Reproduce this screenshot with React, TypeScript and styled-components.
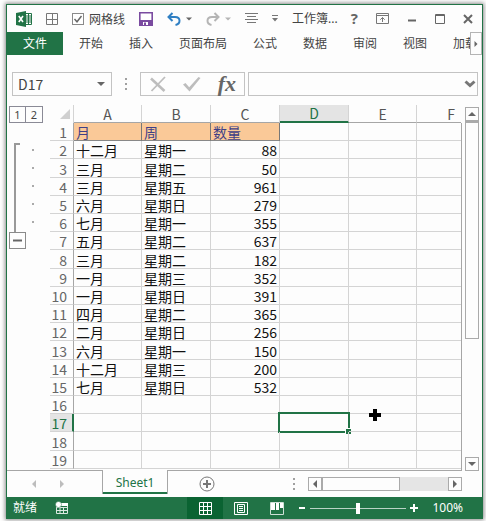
import React from "react";
import styled, { createGlobalStyle, css } from "styled-components";

const green = "#217346";
const line = "#d4d4d4";
const rule = "#a6a6a6";
const uiFont = `"Noto Sans", "Noto Sans CJK SC", sans-serif`;
const cellFont = `"Noto Sans CJK SC", sans-serif`;

const GlobalStyle = createGlobalStyle`
  *, *::before, *::after { box-sizing: border-box; }
  body { margin: 0; background: #fdfdfd; font-family: ${uiFont}; font-size: 12px; color: #444; }
  button, input { font: inherit; color: inherit; }
  svg { display: block; }
`;

const Page = styled.div`
  display: flex;
  min-height: 100vh;
  padding: 4px 3px 2px 6px;
`;

const Window = styled.main`
  flex: 1;
  min-width: 0;
  display: flex;
  flex-direction: column;
  border: 1px solid ${green};
  border-bottom: 0;
  background: #fdfdfd;
  box-shadow: 0 0 4px 1px #8c8c8c;
`;

const PlainButton = styled.button`
  display: flex;
  align-items: center;
  justify-content: center;
  flex: none;
  padding: 0;
  border: 0;
  background: none;
`;

/* Title bar */
const TitleBar = styled.header`
  display: flex;
  align-items: center;
  gap: 14px;
  height: 27px;
  padding: 0 9px;
`;

const Split = styled.div`
  display: flex;
  align-items: center;
  gap: 5px;
`;

const CheckLabel = styled.label`
  display: flex;
  align-items: center;
  gap: 5px;
  white-space: nowrap;
`;

const CheckBox = styled.span`
  display: grid;
  width: 12px;
  height: 12px;
  > * { grid-area: 1 / 1; }
  svg { pointer-events: none; }
`;

const CheckInput = styled.input`
  appearance: none;
  margin: 0;
  width: 12px;
  height: 12px;
  border: 1px solid #8a8a8a;
  background: #fff;
`;

const Title = styled.h1`
  flex: 1;
  margin: 0;
  min-width: 0;
  white-space: nowrap;
  font-size: 12px;
  line-height: 18px;
  font-weight: 400;
`;

const Controls = styled.div`
  display: flex;
  align-items: center;
  gap: 18px;
`;

const HelpMark = styled.span`
  padding-bottom: 2px;
  font: bold 15px/18px "Open Sans", sans-serif;
  color: #666;
`;

/* Ribbon tabs */
const Ribbon = styled.nav`
  display: flex;
  height: 23px;
`;

const FileTab = styled(PlainButton)`
  width: 56px;
  padding-bottom: 2px;
  background: ${green};
  color: #fff;
`;

const TabStrip = styled.div`
  flex: 1;
  min-width: 0;
  display: flex;
  overflow: hidden;
  padding-left: 3px;
`;

const RibbonTab = styled(PlainButton)`
  padding: 0 13px 2px;
  white-space: nowrap;
`;

const ScrollTabs = styled(PlainButton)`
  width: 12px;
  border: 1px solid #b4b4b4;
`;

/* Formula bar */
const FormulaBar = styled.section`
  display: flex;
  align-items: center;
  padding: 17px 4px 9px 5px;
`;

const Box = styled.div`
  display: flex;
  align-items: center;
  height: 24px;
  border: 1px solid #c3c3c3;
`;

const NameBox = styled(Box)`
  width: 100px;
  padding: 0 6px 0 5px;
`;

const FxBox = styled(Box)`
  width: 105px;
  padding: 0 8px;
  justify-content: space-between;
`;

const FormulaBox = styled(Box)`
  flex: 1;
  min-width: 0;
  margin-left: 3px;
  padding-right: 1px;
`;

const TextInput = styled.input`
  flex: 1;
  min-width: 0;
  width: 0;
  padding: 0;
  border: 0;
  outline: 0;
  background: none;
  font-family: ${cellFont};
  font-size: 14px;
  line-height: 20px;
`;

const Fx = styled.span`
  font: italic bold 22px/22px "Liberation Serif", serif;
  color: #666;
`;

const Grip = styled.span`
  flex: none;
  width: 2px;
  height: 12px;
  margin: 0 13px;
  background: repeating-linear-gradient(#a0a0a0 0 2px, transparent 2px 5px);
`;

/* Sheet */
const Workspace = styled.section`
  flex: 1;
  display: flex;
  min-height: 0;
`;

const Pane = styled.div`
  flex: 1;
  min-width: 0;
  display: flex;
  border-bottom: 1px solid ${rule};
`;

const Outline = styled.aside`
  flex: none;
  width: 43px;
  padding: 1px 7px 0 2px;
`;

const Levels = styled.div`
  display: flex;
  width: 34px;
`;

const LevelButton = styled(PlainButton)`
  width: 17px;
  height: 17px;
  border: 1px solid #8a8a96;
  font-size: 11px;
  & + & { border-left: 0; }
`;

const Group = styled.div`
  display: flex;
  padding-top: 20px;
`;

const Bracket = styled.div`
  width: 17px;
`;

const BracketLine = styled.div`
  width: 6px;
  height: 89px;
  margin-left: 5px;
  border-top: 2px solid #999;
  border-left: 2px solid #999;
`;

const Collapse = styled(PlainButton)`
  width: 17px;
  height: 17px;
  border: 1px solid #8a8a8a;
`;

const Dots = styled.div`
  display: flex;
  flex-direction: column;
  gap: 16px;
  padding: 6px 0 0 6px;
`;

const Dot = styled.i`
  width: 2px;
  height: 2px;
  background: #aaa;
`;

const SheetFrame = styled.div`
  flex: 1;
  min-width: 0;
  display: flex;
  padding-right: 1px;
  background: linear-gradient(transparent 18px, ${rule} 18px);
`;

const SheetView = styled.div`
  flex: 1;
  min-width: 0;
  display: flex;
  overflow: hidden;
  padding-bottom: 1px;
  background: #fdfdfd;
`;

const Sheet = styled.table`
  flex: none;
  width: 436px;
  table-layout: fixed;
  border-spacing: 0;
  font-family: ${cellFont};
  font-size: 14px;
  line-height: 16px;
`;

const Col = styled.col<{ $w: number }>`
  width: ${(p) => p.$w}px;
`;

const ColHead = styled.th<{ $active?: boolean }>`
  height: 18px;
  padding: 0;
  font-weight: 400;
  color: #555;
  border-right: 1px solid ${line};
  border-bottom: 1px solid ${rule};
  ${(p) => p.$active && css`
    background: #e4e4e4;
    color: ${green};
    border-bottom: 2px solid ${green};
  `}
`;

const Corner = styled.th`
  height: 18px;
  padding: 0 3px 0 10px;
  border-right: 1px solid ${line};
`;

const RowHead = styled.th<{ $active?: boolean }>`
  padding: 1px 6px 0 0;
  text-align: right;
  font-weight: 400;
  color: #666;
  border-right: 1px solid ${rule};
  border-bottom: 1px solid ${line};
  ${(p) => p.$active && css`
    padding-right: 5px;
    background: #e4e4e4;
    color: ${green};
    border-right: 2px solid ${green};
  `}
`;

const Cell = styled.td<{ $head?: boolean; $num?: boolean }>`
  position: relative;
  padding: 1px 2px 0;
  white-space: nowrap;
  color: #111;
  text-align: ${(p) => (p.$num ? "right" : "left")};
  border-right: 1px solid ${line};
  border-bottom: 1px solid ${line};
  ${(p) => p.$head && css`
    background: #fac998;
    color: #3f3f86;
    border-right-color: #777;
    border-bottom-color: #888;
  `}
`;

const Selection = styled.div`
  position: absolute;
  inset: -2px;
  border: 2px solid ${green};
  &::after {
    content: "";
    position: absolute;
    right: -3px;
    bottom: -3px;
    width: 6px;
    height: 6px;
    border: solid #fdfdfd;
    border-width: 1px 0 0 1px;
    background: ${green};
  }
`;

const Pointer = styled.svg`
  position: absolute;
  left: 20px;
  top: -5px;
`;

const VScroll = styled.div`
  flex: none;
  width: 20px;
  display: flex;
  flex-direction: column;
  padding: 2px 3px 0 3px;
`;

const ScrollButton = styled(PlainButton)`
  width: 14px;
  height: 14px;
  border: 1px solid #aaa;
`;

const VTrack = styled.div`
  flex: 1;
`;

const VThumb = styled.div`
  height: 65%;
  border: 1px solid #aaa;
  border-top-width: 2px;
`;

/* Sheet tabs */
const SheetBar = styled.section`
  display: flex;
  align-items: center;
  height: 26px;
  padding-right: 20px;
`;

const SheetNav = styled.div`
  display: flex;
  gap: 20px;
  width: 95px;
  padding-left: 23px;
`;

const SheetTab = styled(PlainButton)`
  align-self: flex-start;
  width: 66px;
  height: 24px;
  margin-top: -1px;
  border: solid ${rule};
  border-width: 0 1px;
  box-shadow: inset 0 -2px ${green};
  background: #fdfdfd;
  color: ${green};
`;

const AddSheet = styled(PlainButton)`
  margin-left: 31px;
`;

const Spacer = styled.div`
  flex: 1;
`;

const HScroll = styled.div`
  display: flex;
  width: 154px;
  background: #e5e5e5;
`;

const HTrack = styled.div`
  flex: 1;
`;

const HThumb = styled.div`
  width: 62%;
  height: 14px;
  border: 1px solid #aaa;
  background: #fdfdfd;
`;

const HButton = styled(ScrollButton)`
  background: #fdfdfd;
`;

/* Status bar */
const StatusBar = styled.footer`
  display: flex;
  align-items: stretch;
  height: 22px;
  padding: 0 19px 0 6px;
  background: ${green};
  color: #fff;
`;

const StatusText = styled.span`
  align-self: center;
  padding-bottom: 2px;
  white-space: nowrap;
`;

const MacroButton = styled(PlainButton)`
  margin-left: 18px;
`;

const ViewButton = styled(PlainButton)<{ $active?: boolean }>`
  width: 36px;
  background: ${(p) => (p.$active ? "#0a6332" : "none")};
`;

const Zoom = styled.div`
  display: flex;
  align-items: center;
  gap: 4px;
  margin: 0 14px 0 3px;
`;

const ZoomSlider = styled.input`
  appearance: none;
  width: 96px;
  height: 12px;
  margin: 0;
  background: linear-gradient(#b9d3c5, #b9d3c5) center / 100% 1px no-repeat;
  &::-webkit-slider-thumb {
    appearance: none;
    width: 4px;
    height: 11px;
    background: #fff;
  }
`;

type Dir = "up" | "down" | "left" | "right";
const arrows: Record<Dir, string> = {
  up: "M0 6 4 2l4 4z",
  down: "M0 2h8L4 6z",
  left: "M6 0v8L2 4z",
  right: "M2 0v8l4-4z",
};
const Arrow = ({ dir, size = 8, color = "#666" }: { dir: Dir; size?: number; color?: string }) => (
  <svg width={size} height={size} viewBox="0 0 8 8" fill={color}><path d={arrows[dir]} /></svg>
);

const ExcelLogo = () => (
  <svg width="16" height="16" viewBox="0 0 16 16">
    <path d="M9 2.5h6.5v11H9z" fill="#fff" stroke={green} />
    <path d="M10 5h5M10 7h5M10 9h5M10 11h5M12.5 3v10" stroke={green} />
    <path d="M0 2 10 0v16L0 14z" fill={green} />
    <path d="m2.8 5 4.2 6M7 5l-4.2 6" stroke="#fff" strokeWidth="1.6" />
  </svg>
);

const UndoIcon = ({ color, flip }: { color: string; flip?: boolean }) => (
  <svg width="14" height="14" viewBox="0 0 14 14" fill="none" stroke={color} strokeWidth="2">
    <g transform={flip ? "matrix(-1 0 0 1 14 0)" : undefined}>
      <path d="M5.5 1 1.5 5l4 4M2 5h6c3 0 4.5 1.6 4.5 3.8S11 12.5 8.5 13" />
    </g>
  </svg>
);

const columns = [
  { name: "A", width: 68 },
  { name: "B", width: 69 },
  { name: "C", width: 69 },
  { name: "D", width: 69 },
  { name: "E", width: 68 },
  { name: "F", width: 69 },
];

const data: string[][] = [
  ["月", "周", "数量"],
  ["十二月", "星期一", "88"],
  ["三月", "星期二", "50"],
  ["三月", "星期五", "961"],
  ["六月", "星期日", "279"],
  ["七月", "星期一", "355"],
  ["五月", "星期二", "637"],
  ["三月", "星期二", "182"],
  ["一月", "星期三", "352"],
  ["一月", "星期日", "391"],
  ["四月", "星期二", "365"],
  ["二月", "星期日", "256"],
  ["六月", "星期一", "150"],
  ["十二月", "星期三", "200"],
  ["七月", "星期日", "532"],
  [], [], [], [],
];

const ribbonTabs = ["开始", "插入", "页面布局", "公式", "数据", "审阅", "视图", "加载项"];

export default function App() {
  return (
    <Page>
      <GlobalStyle />
      <Window>
        <TitleBar>
          <ExcelLogo />
          <PlainButton aria-label="边框">
            <svg width="12" height="12" viewBox="0 0 12 12" fill="none" stroke="#777"><path d="M.5.5h11v11H.5zM6.5 0v12M0 6.5h12" /></svg>
          </PlainButton>
          <CheckLabel>
            <CheckBox>
              <CheckInput type="checkbox" defaultChecked />
              <svg width="12" height="12" viewBox="0 0 12 12" fill="none" stroke="#666" strokeWidth="1.4"><path d="m2.5 6 2.5 2.8L9.5 3" /></svg>
            </CheckBox>
            网格线
          </CheckLabel>
          <PlainButton aria-label="保存">
            <svg width="14" height="14" viewBox="0 0 14 14">
              <path d="M.8.8h12.4v12.4H.8z" fill="#fff" stroke="#7a4ba0" strokeWidth="1.6" />
              <path d="M1 8h12v5H1z" fill="#7a4ba0" />
              <path d="M4 10h5v3H4z" fill="#fff" /><path d="M5 10.500h2v3H5z" fill="#7a4ba0" />
            </svg>
          </PlainButton>
          <Split>
            <PlainButton aria-label="撤消"><UndoIcon color="#2f7fc3" /></PlainButton>
            <PlainButton aria-label="撤消列表"><Arrow dir="down" size={6} /></PlainButton>
          </Split>
          <Split>
            <PlainButton aria-label="恢复"><UndoIcon color="#b5b5b5" flip /></PlainButton>
            <PlainButton aria-label="恢复列表"><Arrow dir="down" size={6} color="#b5b5b5" /></PlainButton>
          </Split>
          <PlainButton aria-label="居中">
            <svg width="13" height="11" viewBox="0 0 13 11" stroke="#777"><path d="M0 .5h13M2 3.500h9M0 6.500h13M2 9.500h9" /></svg>
          </PlainButton>
          <PlainButton aria-label="自定义快速访问工具栏">
            <svg width="6" height="7" viewBox="0 0 6 7" fill="#777"><path d="M0 0h6v1H0zM0 3h6L3 6.500z" /></svg>
          </PlainButton>
          <Title>工作簿...</Title>
          <Controls>
            <PlainButton aria-label="帮助"><HelpMark>?</HelpMark></PlainButton>
            <PlainButton aria-label="功能区显示选项">
              <svg width="13" height="11" viewBox="0 0 13 11" fill="none" stroke="#777"><path d="M.5.5h12v10H.5zM0 2.500h13M6.500 9V4.500M4.300 6.700l2.200-2.200 2.200 2.200" /></svg>
            </PlainButton>
            <PlainButton aria-label="最小化">
              <svg width="10" height="10" viewBox="0 0 10 10"><path d="M1 5.500h8v2H1z" fill="#666" /></svg>
            </PlainButton>
            <PlainButton aria-label="最大化">
              <svg width="10" height="10" viewBox="0 0 10 10" fill="none" stroke="#666"><path d="M.5.5h9v9h-9zM0 1.500h10" /></svg>
            </PlainButton>
            <PlainButton aria-label="关闭">
              <svg width="10" height="10" viewBox="0 0 10 10" stroke="#666" strokeWidth="2"><path d="m1 1 8 8M9 1 1 9" /></svg>
            </PlainButton>
          </Controls>
        </TitleBar>

        <Ribbon>
          <FileTab>文件</FileTab>
          <TabStrip>
            {ribbonTabs.map((t) => <RibbonTab key={t}>{t}</RibbonTab>)}
          </TabStrip>
          <ScrollTabs aria-label="向右滚动"><Arrow dir="right" size={6} /></ScrollTabs>
        </Ribbon>

        <FormulaBar>
          <NameBox>
            <TextInput aria-label="名称框" defaultValue="D17" />
            <PlainButton aria-label="名称列表"><Arrow dir="down" /></PlainButton>
          </NameBox>
          <Grip />
          <FxBox>
            <PlainButton aria-label="取消">
              <svg width="18" height="18" viewBox="0 0 18 18" fill="none" stroke="#bdbdbd"><path d="M2 3.500 15.500 16" strokeWidth="2.600" /><path d="M16 2 2.500 16" strokeWidth="1.800" /></svg>
            </PlainButton>
            <PlainButton aria-label="输入">
              <svg width="20" height="18" viewBox="0 0 20 18" fill="#bdbdbd"><path d="m1 9.500 2.500-1.500 3.700 4.200L16.500 2l2 1L7.500 16.500z" /></svg>
            </PlainButton>
            <PlainButton aria-label="插入函数"><Fx>fx</Fx></PlainButton>
          </FxBox>
          <FormulaBox>
            <TextInput aria-label="编辑栏" />
            <PlainButton aria-label="展开编辑栏">
              <svg width="12" height="10" viewBox="0 0 12 10" fill="none" stroke="#777" strokeWidth="3"><path d="m1.500 2.500 4.500 4 4.500-4" /></svg>
            </PlainButton>
          </FormulaBox>
        </FormulaBar>

        <Workspace>
          <Pane>
            <Outline>
              <Levels>
                <LevelButton>1</LevelButton>
                <LevelButton>2</LevelButton>
              </Levels>
              <Group>
                <Bracket>
                  <BracketLine />
                  <Collapse aria-label="折叠">
                    <svg width="9" height="3" viewBox="0 0 9 3"><path d="M0 .5h9v2H0z" fill="#666" /></svg>
                  </Collapse>
                </Bracket>
                <Dots>{[0, 1, 2, 3, 4].map((i) => <Dot key={i} />)}</Dots>
              </Group>
            </Outline>
            <SheetFrame>
              <SheetView>
                <Sheet>
                  <colgroup>
                    <Col $w={24} />
                    {columns.map((c) => <Col key={c.name} $w={c.width} />)}
                  </colgroup>
                  <thead>
                    <tr>
                      <Corner aria-label="全选">
                        <svg width="10" height="10" viewBox="0 0 10 10"><path d="M10 0v10H0z" fill="#d0d0d0" /></svg>
                      </Corner>
                      {columns.map((c) => <ColHead key={c.name} scope="col" $active={c.name === "D"}>{c.name}</ColHead>)}
                    </tr>
                  </thead>
                  <tbody>
                    {data.map((row, r) => (
                      <tr key={r}>
                        <RowHead scope="row" $active={r === 16}>{r + 1}</RowHead>
                        {columns.map((c, i) => (
                          <Cell key={c.name} $head={r === 0 && i < 3} $num={r > 0 && i === 2}>
                            {row[i]}
                            {r === 16 && c.name === "D" && <Selection />}
                            {r === 16 && c.name === "E" && (
                              <Pointer width="12" height="12" viewBox="0 0 12 12"><path d="M4 0h4v4h4v4H8v4H4V8H0V4h4z" fill="#000" /></Pointer>
                            )}
                          </Cell>
                        ))}
                      </tr>
                    ))}
                  </tbody>
                </Sheet>
              </SheetView>
            </SheetFrame>
          </Pane>
          <VScroll>
            <ScrollButton aria-label="向上滚动"><Arrow dir="up" /></ScrollButton>
            <VTrack><VThumb /></VTrack>
            <ScrollButton aria-label="向下滚动"><Arrow dir="down" /></ScrollButton>
          </VScroll>
        </Workspace>

        <SheetBar>
          <SheetNav>
            <PlainButton aria-label="上一张工作表"><Arrow dir="left" color="#bdbdbd" /></PlainButton>
            <PlainButton aria-label="下一张工作表"><Arrow dir="right" color="#bdbdbd" /></PlainButton>
          </SheetNav>
          <SheetTab>Sheet1</SheetTab>
          <AddSheet aria-label="新工作表">
            <svg width="16" height="16" viewBox="0 0 16 16" fill="none" stroke="#777"><circle cx="8" cy="8" r="7" /><path d="M8 4v8M4 8h8" strokeWidth="2" /></svg>
          </AddSheet>
          <Spacer />
          <Grip />
          <HScroll>
            <HButton aria-label="向左滚动"><Arrow dir="left" /></HButton>
            <HTrack><HThumb /></HTrack>
            <HButton aria-label="向右滚动"><Arrow dir="right" /></HButton>
          </HScroll>
        </SheetBar>

        <StatusBar>
          <StatusText>就绪</StatusText>
          <MacroButton aria-label="录制宏">
            <svg width="14" height="14" viewBox="0 0 14 14">
              <path d="M1.500 3.500h11v9h-11zM1 6.500h12M5 6v7M8.500 6v7M2 9.500h11" fill="none" stroke="#dbe8e1" />
              <path d="M6 2h7v3H6z" fill="#fff" /><circle cx="3.500" cy="3.500" r="3" fill="#fff" stroke={green} strokeWidth=".5" />
            </svg>
          </MacroButton>
          <Spacer />
          <ViewButton $active aria-label="普通">
            <svg width="13" height="13" viewBox="0 0 13 13" fill="none" stroke="#fff"><path d="M.5.5h12v12H.5zM4.500 0v13M8.500 0v13M0 4.500h13M0 8.500h13" /></svg>
          </ViewButton>
          <ViewButton aria-label="页面布局">
            <svg width="14" height="13" viewBox="0 0 14 13" fill="none" stroke="#fff"><path d="M.5.5h13v12H.5zM3.500 2.500h7v8h-7zM5 4.500h4M5 6.500h4M5 8.500h4" /></svg>
          </ViewButton>
          <ViewButton aria-label="分页预览">
            <svg width="14" height="13" viewBox="0 0 14 13"><path d="M.5.5h13v12H.5z" fill="none" stroke="#cfe0d7" /><path d="M1 1h4v7H1zM6 1h3v7H6zM10 1h3v5h-3z" fill="#fff" /></svg>
          </ViewButton>
          <Zoom>
            <PlainButton aria-label="缩小"><svg width="8" height="8" viewBox="0 0 8 8"><path d="M1 3h6v2H1z" fill="#fff" /></svg></PlainButton>
            <ZoomSlider type="range" min="0" max="200" defaultValue="100" aria-label="显示比例" />
            <PlainButton aria-label="放大"><svg width="8" height="8" viewBox="0 0 8 8"><path d="M3 0h2v3h3v2H5v3H3V5H0V3h3z" fill="#fff" /></svg></PlainButton>
          </Zoom>
          <StatusText>100%</StatusText>
        </StatusBar>
      </Window>
    </Page>
  );
}
